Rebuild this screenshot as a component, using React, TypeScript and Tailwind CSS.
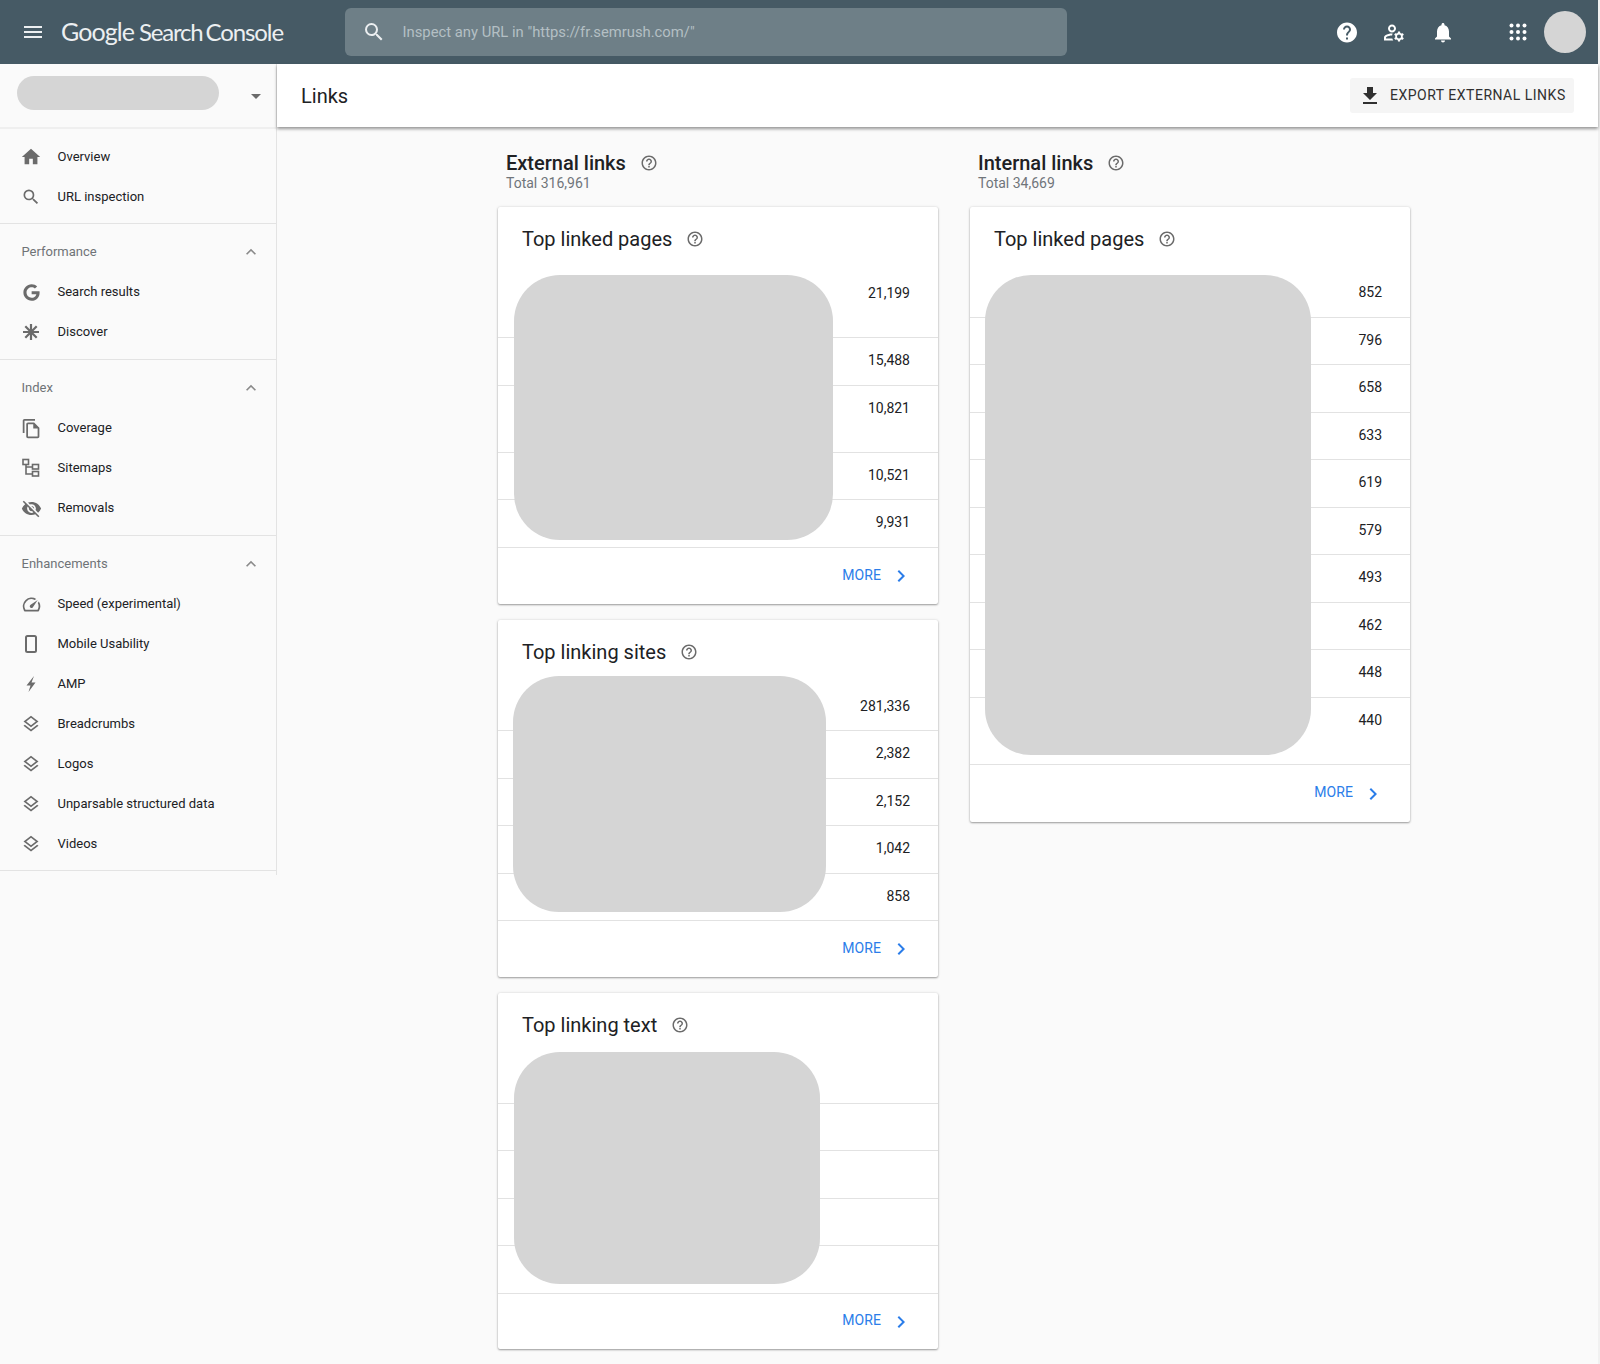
import React from 'react'
import {
  MdMenu, MdSearch, MdHelp, MdNotifications, MdOutlineManageAccounts, MdHome, MdExpandLess,
  MdOutlineFileCopy, MdVisibilityOff, MdOutlineSpeed, MdOutlineLayers, MdHelpOutline,
  MdFileDownload, MdChevronRight, MdArrowDropDown,
} from 'react-icons/md'
import { FaGoogle } from 'react-icons/fa'

const font = { fontFamily: 'Roboto, sans-serif' }

const SitemapIcon = () => (
  <svg width="20" height="20" viewBox="0 0 20 20" fill="none" stroke="#6b6b6b" strokeWidth="1.6">
    <rect x="2" y="1.5" width="5.5" height="5" />
    <rect x="11.5" y="6.5" width="6" height="4.5" />
    <rect x="11.5" y="13.5" width="6" height="4.5" />
    <path d="M5 6.5V16H11.5M5 9H11.5" />
  </svg>
)

const DiscoverIcon = () => (
  <svg width="20" height="20" viewBox="0 0 20 20" stroke="#6b6b6b" strokeWidth="2.2">
    <path d="M10 2V18M2 10H18M4.3 4.3L15.7 15.7M15.7 4.3L4.3 15.7" />
  </svg>
)

const MobileIcon = () => (
  <svg width="20" height="20" viewBox="0 0 20 20" fill="none" stroke="#6b6b6b" strokeWidth="2">
    <rect x="5" y="2" width="10" height="16" rx="1.5" />
  </svg>
)

const BoltIcon = () => (
  <svg width="20" height="20" viewBox="0 0 20 20" fill="#6b6b6b">
    <path d="M13 2L5.5 11.5H9.5L7.5 18L14.5 8.5H10.5Z" />
  </svg>
)

const AppsIcon = () => (
  <svg width="18" height="18" viewBox="0 0 18 18" fill="#fff">
    {[2.5, 9, 15.5].map((cy) =>
      [2.5, 9, 15.5].map((cx) => <circle key={`${cx}-${cy}`} cx={cx} cy={cy} r="2" />),
    )}
  </svg>
)

const icon = 'text-[#6b6b6b]'

const sections = [
  {
    items: [
      { label: 'Overview', icon: <MdHome size={22} className={icon} /> },
      { label: 'URL inspection', icon: <MdSearch size={20} className={icon} /> },
    ],
  },
  {
    title: 'Performance',
    items: [
      { label: 'Search results', icon: <FaGoogle size={17} className={icon} /> },
      { label: 'Discover', icon: <DiscoverIcon /> },
    ],
  },
  {
    title: 'Index',
    items: [
      { label: 'Coverage', icon: <MdOutlineFileCopy size={21} className={icon} /> },
      { label: 'Sitemaps', icon: <SitemapIcon /> },
      { label: 'Removals', icon: <MdVisibilityOff size={21} className={icon} /> },
    ],
  },
  {
    title: 'Enhancements',
    items: [
      { label: 'Speed (experimental)', icon: <MdOutlineSpeed size={21} className={icon} /> },
      { label: 'Mobile Usability', icon: <MobileIcon /> },
      { label: 'AMP', icon: <BoltIcon /> },
      { label: 'Breadcrumbs', icon: <MdOutlineLayers size={20} className={icon} /> },
      { label: 'Logos', icon: <MdOutlineLayers size={20} className={icon} /> },
      { label: 'Unparsable structured data', icon: <MdOutlineLayers size={20} className={icon} /> },
      { label: 'Videos', icon: <MdOutlineLayers size={20} className={icon} /> },
    ],
  },
]

const Header = () => (
  <header className="flex h-[64px] items-center bg-[#465a65] text-white">
    <div className="flex w-[61px] justify-center pl-[5px]">
      <MdMenu size={24} className="text-[#eceff1]" />
    </div>
    <div className="flex w-[283.5px] items-baseline text-[#eceff1]" style={{ fontFamily: 'Lato, sans-serif' }}>
      <span className="text-[25px] tracking-[-0.9px]">Google</span>
      <span className="ml-[5px] text-[24px] tracking-[-1.2px]">Search</span>
      <span className="ml-[3px] text-[24px] tracking-[-1.1px]">Console</span>
    </div>
    <div className="flex h-[48px] w-[722px] items-center rounded-[6px] bg-[#6e7f87]">
      <MdSearch size={24} className="ml-[17px] text-[#eceff1]" />
      <span className="ml-[17px] text-[14.8px] text-[#b4bfc4]" style={font}>
        Inspect any URL in "https://fr.semrush.com/"
      </span>
    </div>
    <div className="ml-[268px] flex w-[24px] justify-center">
      <MdHelp size={25} />
    </div>
    <div className="ml-[23px] flex w-[24px] justify-center">
      <MdOutlineManageAccounts size={25} />
    </div>
    <div className="ml-[25px] flex w-[24px] justify-center">
      <MdNotifications size={25} />
    </div>
    <div className="ml-[51px] flex w-[24px] justify-center">
      <AppsIcon />
    </div>
    <div className="ml-[14px] h-[42px] w-[42px] rounded-full bg-[#d5d5d5]" />
  </header>
)

const Sidebar = () => (
  <aside className="h-[811px] w-[277px] shrink-0 border-r border-[#e3e3e3]" style={font}>
    <div className="flex h-[65px] items-center border-b-2 border-[#efefef] pl-[17px]">
      <div className="-mt-[5px] h-[34px] w-[202px] rounded-full bg-[#d5d5d5]" />
      <MdArrowDropDown size={24} className="ml-[25px] text-[#6b6b6b]" />
    </div>
    {sections.map((section, i) => (
      <div key={i} className={`border-b border-[#e3e3e3] pt-2 ${i === 0 || i === 3 ? 'pb-[6px]' : 'pb-[7px]'}`}>
        {section.title && (
          <div className="flex h-[40px] items-center justify-between pr-[15px] pl-[21.5px] text-[13px] text-[#6f7377]">
            <span>{section.title}</span>
            <MdExpandLess size={20} className="text-[#8a8a8a]" />
          </div>
        )}
        {section.items.map((item) => (
          <div key={item.label} className="flex h-[40px] items-center text-[13px] text-[#202124]">
            <div className="flex w-[62px] justify-center">{item.icon}</div>
            <span className="-ml-[4.5px]">{item.label}</span>
          </div>
        ))}
      </div>
    ))}
  </aside>
)

type Row = { value?: string; tall?: boolean }

type CardProps = {
  title: string
  rows: Row[]
  blobClass: string
  headClass: string
  footClass: string
}

const Card = ({ title, rows, blobClass, headClass, footClass }: CardProps) => (
  <section className="relative rounded-[2px] bg-white shadow-[0_1px_2px_rgba(0,0,0,0.35),0_0_3px_rgba(0,0,0,0.12)]">
    <div className={`flex items-start pt-[19px] pl-[24px] ${headClass}`}>
      <h3 className="text-[20px] leading-[26px] text-[#202124]">{title}</h3>
      <MdHelpOutline size={18} className="mt-[4px] ml-[14px] text-[#6b6b6b]" />
    </div>
    {rows.map((row, i) => (
      <div
        key={i}
        className={`${row.tall ? 'h-[67px]' : 'h-[47.5px]'} border-b border-[#e2e2e2] pt-[13px] pr-[28px] text-right text-[14px] leading-[18px] text-[#202124]`}
      >
        {row.value}
      </div>
    ))}
    <div className={`flex items-center justify-end pr-[25px] pb-[1px] text-[14px] tracking-[0.1px] text-[#2b7de9] ${footClass}`}>
      <span>MORE</span>
      <MdChevronRight size={24} className="mt-[2px] ml-[8px]" />
    </div>
    <div className={`absolute rounded-[46px] bg-[#d5d5d5] ${blobClass}`} />
  </section>
)

const ColumnTitle = ({ title, total }: { title: string; total: string }) => (
  <div className="h-[56px] pl-[8px]">
    <div className="flex items-center">
      <h2 className="text-[20px] leading-[24px] font-medium text-[#202124]">{title}</h2>
      <MdHelpOutline size={18} className="ml-[14px] text-[#6b6b6b]" />
    </div>
    <div className="text-[14px] leading-[16px] text-[#70757a]">{total}</div>
  </div>
)

export default function App() {
  return (
    <div className="min-h-[1364px] bg-[#f1f1f1] pr-[2px]" style={font}>
      <div className="min-h-[1364px] bg-[#fafafa]">
        <Header />
        <div className="flex">
          <Sidebar />
          <main className="min-w-0 flex-1">
            <div className="flex h-[63px] items-center justify-between bg-white pr-[24px] pl-[24px] shadow-[0_2px_3px_rgba(0,0,0,0.4)]">
              <h1 className="text-[20px] text-[#202124]">Links</h1>
              <button className="flex h-[35px] w-[224px] items-center rounded-[3px] bg-[#f5f5f5] pl-[8px] text-[14px] tracking-[0.5px] text-[#303030]">
                <MdFileDownload size={24} />
                <span className="ml-[8px]">EXPORT EXTERNAL LINKS</span>
              </button>
            </div>
            <div className="ml-[221px] grid w-[912px] grid-cols-2 gap-x-[32px] pt-[24px]">
              <div>
                <ColumnTitle title="External links" total="Total 316,961" />
                <div className="flex flex-col gap-[16px]">
                  <Card
                    title="Top linked pages"
                    headClass="h-[64px]"
                    footClass="h-[56px]"
                    blobClass="top-[68px] left-[16px] h-[265px] w-[319px]"
                    rows={[
                      { value: '21,199', tall: true },
                      { value: '15,488' },
                      { value: '10,821', tall: true },
                      { value: '10,521' },
                      { value: '9,931' },
                    ]}
                  />
                  <Card
                    title="Top linking sites"
                    headClass="h-[64px]"
                    footClass="h-[55.5px]"
                    blobClass="top-[56px] left-[15px] h-[236px] w-[313px]"
                    rows={[
                      { value: '281,336' },
                      { value: '2,382' },
                      { value: '2,152' },
                      { value: '1,042' },
                      { value: '858' },
                    ]}
                  />
                  <Card
                    title="Top linking text"
                    headClass="h-[63.5px]"
                    footClass="h-[55px]"
                    blobClass="top-[59.5px] left-[16px] h-[232px] w-[306px]"
                    rows={[{}, {}, {}, {}, {}]}
                  />
                </div>
              </div>
              <div>
                <ColumnTitle title="Internal links" total="Total 34,669" />
                <Card
                  title="Top linked pages"
                  headClass="h-[63px]"
                  footClass="h-[57px]"
                  blobClass="top-[68px] left-[15px] h-[480px] w-[326px]"
                  rows={[
                    { value: '852' },
                    { value: '796' },
                    { value: '658' },
                    { value: '633' },
                    { value: '619' },
                    { value: '579' },
                    { value: '493' },
                    { value: '462' },
                    { value: '448' },
                    { value: '440', tall: true },
                  ]}
                />
              </div>
            </div>
          </main>
        </div>
      </div>
    </div>
  )
}
